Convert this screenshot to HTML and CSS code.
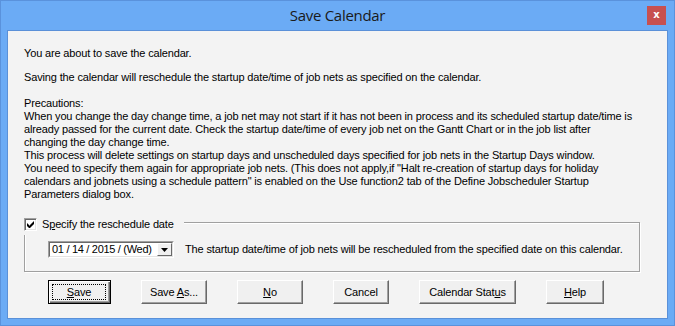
FILE: index.html
```html
<!DOCTYPE html>
<html lang="en">
<head>
  <meta charset="UTF-8" />
  <title>Save Calendar</title>
  <link rel="stylesheet" href="styles.css">
</head>
<body>
  <div class="window">
    <div class="titlebar">
      <span class="title">Save Calendar</span>
      <span class="close">x</span>
    </div>

    <div class="client">
      <p class="msg first">You are about to save the calendar.</p>
      <p class="msg">Saving the calendar will reschedule the startup date/time of job nets as specified on the calendar.</p>
      <p class="msg">
        Precautions:<br>
        When you change the day change time, a job net may not start if it has not been in process and its scheduled startup date/time is<br>
        already passed for the current date. Check the startup date/time of every job net on the Gantt Chart or in the job list after<br>
        changing the day change time.<br>
        This process will delete settings on startup days and unscheduled days specified for job nets in the Startup Days window.<br>
        You need to specify them again for appropriate job nets. (This does not apply,if &quot;Halt re-creation of startup days for holiday<br>
        calendars and jobnets using a schedule pattern&quot; is enabled on the Use function2 tab of the Define Jobscheduler Startup<br>
        Parameters dialog box.
      </p>

      <!-- group box with checkbox caption -->
      <div class="group">
        <div class="group-head">
          <span class="checkbox">
            <svg width="7" height="7" viewBox="0 0 7 7"><path d="M0 2.5h1v1h1v1h1v-1h1v-1h1v-1h1v-1h1v3h-1v1h-1v1h-1v1h-1v1h-1v-1h-1v-1h-1z" fill="#000"/></svg>
          </span>
          <span>S<u>p</u>ecify the reschedule date</span>
        </div>
        <div class="date-row">
          <div class="combo">
            <div class="combo-in">
              <span class="combo-text">01 / 14 / 2015 / (Wed)</span>
              <span class="combo-btn">
                <svg width="7" height="4" viewBox="0 0 7 4"><polygon points="0,0 7,0 3.5,4" fill="#000"/></svg>
              </span>
            </div>
          </div>
          <span class="date-note">The startup date/time of job nets will be rescheduled from the specified date on this calendar.</span>
        </div>
      </div>

      <div class="buttons">
        <div class="btn default w-save"><span class="focus"><span><u>S</u>ave</span></span></div>
        <div class="btn w-saveas"><span>Save <u>A</u>s...</span></div>
        <div class="btn w-no"><span><u>N</u>o</span></div>
        <div class="btn w-cancel"><span>Cancel</span></div>
        <div class="btn w-status"><span>Calendar Stat<u>u</u>s</span></div>
        <div class="btn w-help"><span><u>H</u>elp</span></div>
      </div>
    </div>
  </div>
</body>
</html>
```

FILE: styles.css
```css
body {
  margin: 0;
  font-family: "Liberation Sans", Arial, sans-serif;
  font-size: 11px;
  letter-spacing: -0.15px;
  color: #000;
}

/* Window frame */
.window {
  width: 675px;
  height: 326px;
  box-sizing: border-box;
  background-color: #6babf5;
  border: 1px solid #5a92dc;
  display: flex;
  flex-direction: column;
}

.titlebar {
  height: 29px;
  display: grid;
  grid-template-columns: 1fr auto 1fr;
  align-items: start;
}

.title {
  grid-column: 2;
  margin-top: 4px;
  font-family: "Open Sans", sans-serif;
  font-size: 15px;
  line-height: 20px;
  letter-spacing: -0.3px;
  color: #1a1a1a;
}

.close {
  grid-column: 3;
  justify-self: end;
  width: 19px;
  height: 19px;
  margin: 5px 8px 0 0;
  background-color: #c75050;
  color: #fff;
  font: bold 10px/17px "DejaVu Sans", sans-serif;
  letter-spacing: 0;
  text-align: center;
}

/* Dialog body */
.client {
  flex: 1;
  margin: 0 6px 6px;
  border: 1px solid #5a90d8;
  background-color: #f3f3f3;
  padding-left: 16px;
}

.msg {
  margin: 11px 0 0;
  line-height: 13px;
  white-space: nowrap;
}

.msg.first {
  margin-top: 16px;
}

.msg + .msg + .msg {
  margin-top: 13px;
}

/* Group box */
.group {
  margin: 21px 27px 0 0;
  padding-bottom: 13px;
  border: 1px solid #a0a0a0;
  box-shadow: 1px 1px 0 #fff, inset 1px 1px 0 #fff;
}

.group-head {
  display: flex;
  align-items: flex-start;
  gap: 5px;
  width: 160px;
  height: 17px;
  margin: -5px 0 0 -1px;
  line-height: 13px;
  background-color: #f3f3f3;
}

.checkbox {
  width: 11px;
  height: 11px;
  display: flex;
  align-items: center;
  justify-content: center;
  background-color: #fff;
  border: 1px solid;
  border-color: #a0a0a0 #fff #fff #a0a0a0;
  box-shadow: inset 1px 1px 0 #696969, inset -1px -1px 0 #e3e3e3;
}

.date-row {
  display: flex;
  align-items: center;
  gap: 11px;
  margin: 6px 0 0 23px;
  line-height: 13px;
  white-space: nowrap;
}

.combo {
  width: 124px;
  height: 15px;
  border: 1px solid;
  border-color: #a0a0a0 #fff #fff #a0a0a0;
  background-color: #fff;
}

.combo-in {
  height: 13px;
  display: flex;
  border: 1px solid;
  border-color: #696969 #e3e3e3 #e3e3e3 #696969;
}

.combo-text {
  flex: 1;
  min-width: 0;
  overflow: hidden;
  padding-left: 2px;
  line-height: 13px;
  letter-spacing: -0.3px;
}

.combo-btn {
  width: 13px;
  height: 11px;
  display: flex;
  align-items: center;
  justify-content: center;
  background-color: #f0f0f0;
  border: 1px solid;
  border-color: #fff #696969 #696969 #fff;
}

/* Button row */
.buttons {
  display: flex;
  gap: 30px;
  margin: 8px 0 0 24px;
}

.btn {
  height: 22px;
  display: flex;
  align-items: center;
  justify-content: center;
  line-height: 13px;
  white-space: nowrap;
  background-color: #f0f0f0;
  border: 1px solid;
  border-color: #fff #696969 #696969 #fff;
  box-shadow: inset -1px -1px 0 #a0a0a0;
}

.btn.default {
  border-color: #000;
  box-shadow: inset 1px 1px 0 #fff, inset -1px -1px 0 #696969, inset -2px -2px 0 #a0a0a0;
  padding: 3px 4px 3px 3px;
  height: 16px;
}

.focus {
  flex: 1;
  align-self: stretch;
  display: flex;
  align-items: center;
  justify-content: center;
  border: 1px dotted #000;
}

.w-save { width: 54px; }
.w-saveas { width: 64px; }
.w-no { width: 64px; }
.w-cancel { width: 54px; }
.w-status { width: 95px; }
.w-help { width: 56px; }
```
